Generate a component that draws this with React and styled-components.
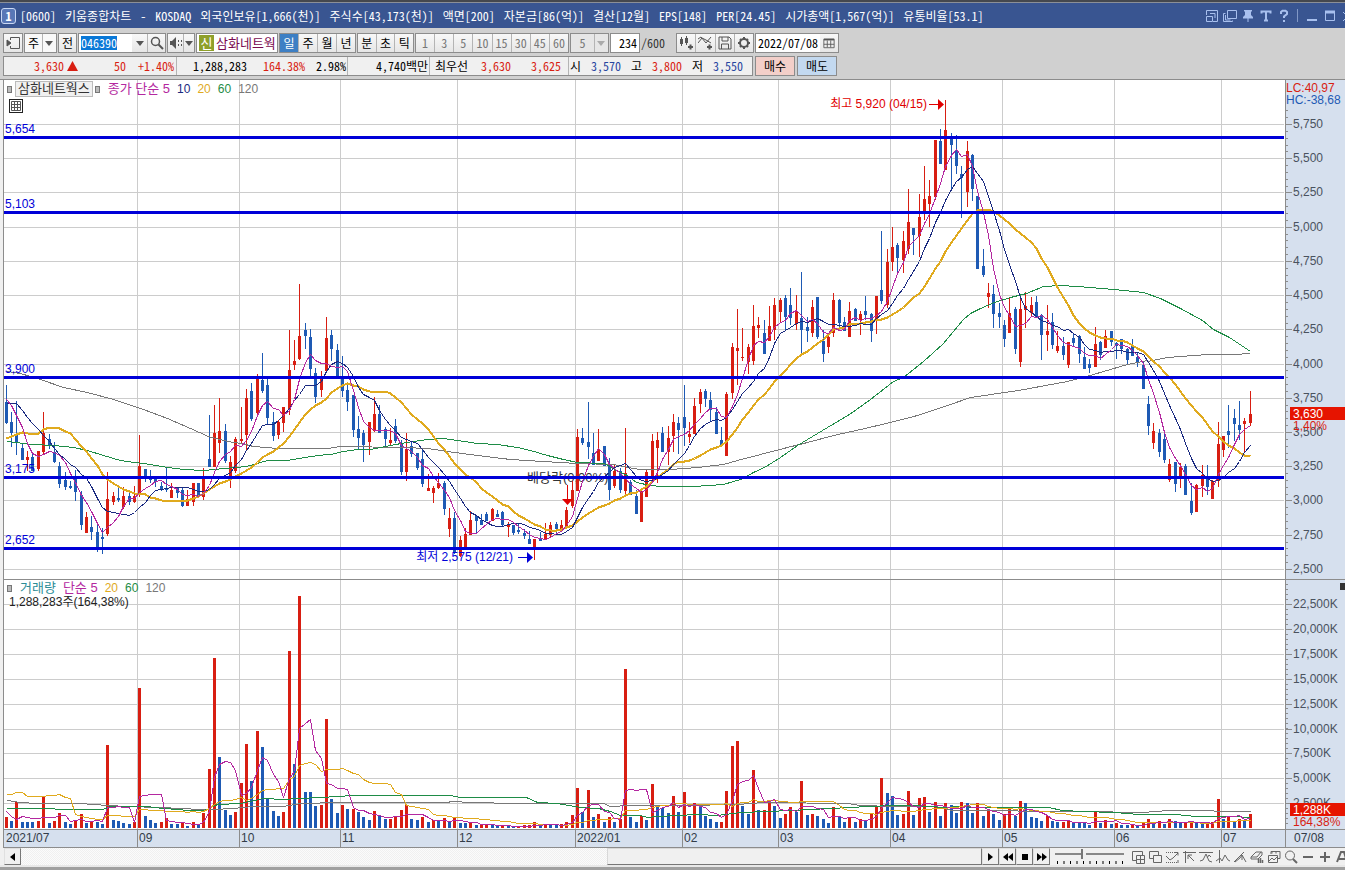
import React, { useEffect, useLayoutEffect, useRef, useState } from "react";
import styled, { createGlobalStyle } from "styled-components";

const MONO = '"Noto Sans Mono CJK KR", "Liberation Mono", "Noto Sans CJK KR", monospace';
const SANS = '"Liberation Sans", "Noto Sans CJK KR", sans-serif';

const C = {
  red: "#d81e12",
  blue: "#1e5ab4",
  line: "#0000d8",
  ma5: "#b428a0",
  ma10: "#1a2a80",
  ma20: "#e0aa1e",
  ma60: "#1e8c46",
  ma120: "#787878",
  grid: "#cccccc",
  axis: "#d6e0ee",
  border: "#8c8c8c",
};

const GlobalStyle = createGlobalStyle`
  * { box-sizing: border-box; }
  body { margin: 0; background: #f0f0f0; font: 12px/14px ${MONO}; color: #000; }
  button, input, select { font: inherit; color: inherit; margin: 0; padding: 0; border-radius: 0; }
`;

/* ---------- data ---------- */

// Each row is one day: direction, high, body top, body bottom, low,
// measured downwards in thirds of a pixel from the block's base line.
const CANDLE_BLOCKS = [
  [270, `B 346 396 458 462,B 425 456 488 530,B 393 493 520 556,B 523 533 570 570,R 543 560 570 603,B 553 560 602 602,R 543 543 598 602,R 426 488 545 552,B 491 506 526 538,B 515 545 575 580,
B 576 588 641 655,B 605 630 650 660,B 633 648 654 656,B 601 625 666 694,B 663 675 765 780,R 727 740 788 788,B 738 770 786 810,B 765 785 831 845,B 775 800 806 851,R 605 686 791 797,
R 666 678 696 705,B 648 685 689 697,R 651 678 710 716,B 660 678 696 704,R 648 678 696 698,R 495 588 675 680,B 596 598 628 635,B 600 625 631 638,B 622 626 637 650,B 636 649 659 664,
B 594 655 659 665,R 640 660 685 685,B 650 655 668 684,B 652 660 708 712,R 660 686 707 707,R 640 640 696 707,B 640 640 681 683,R 595 626 680 690,B 435 567 590 590,R 405 488 590 590,
R 384 483 518 548,B 462 483 572 578,R 558 576 618 654,R 500 507 603 608,R 410 507 514 520,R 357 384 494 540,B 339 363 446 452,R 312 325 428 431,B 249 330 362 368,B 320 345 443 464,
B 426 456 497 513,R 450 456 494 508,R 411 411 458 485,R 179 300 420 434,R 210 273 284 299,R 42 198 266 270,B 159 180 198 236,B 178 200 297 318,B 294 309 380 398,R 303 318 360 380,
R 141 204 302 308,B 180 195 237 272,B 222 240 318 318,B 258 324 362 380,B 346 360 396 422,B 375 375 480 502,B 438 477 503 540,B 480 488 524 575,R 456 456 515 554,R 381 432 483 486,
B 405 432 488 488,B 470 478 507 530,R 475 510 518 524,B 447 468 513 520,B 510 518 606 616,R 489 537 606 634,B 515 528 551 560,B 549 549 594 600,B 540 567 641 650,R 611 654 662 662,
R 648 654 668 698,R 609 639 653 656,B 633 639 716 734,R 714 744 776 800,B 725 744 848 852,R 798 810 858 862,R 774 792 830 830,R 723 750 795 795,B 738 738 752 792,B 732 750 764 764,
B 725 732 753 753,R 713 717 752 752,B 720 733 740 740,B 722 725 765 770,R 755 765 770 800,B 765 765 790 794,B 758 780 786 792,B 776 789 798 806,B 784 807 822 822,R 807 807 831 870,
B 785 807 812 812,R 759 792 806 806,R 757 765 794 800,B 757 762 776 794,R 750 765 782 782,R 711 720 768 768,R 633 660 708 714,R 477 501 662 662,B 474 504 520 524,B 396 516 531 566,
B 489 549 585 585,R 477 540 572 572,B 528 528 588 588,B 564 582 659 690,R 584 603 647 654,B 594 603 659 668,R 474 609 662 680,B 630 636 674 674,B 660 678 731 731,R 655 663 755 755,
R 600 606 680 680,R 492 513 618 635,R 486 510 533 640,B 471 489 545 545`],
  [240, `R 558 594 635 674,R 522 546 588 635,B 530 549 570 641,B 435 531 564 617,R 546 582 592 608,R 474 498 582 582,R 447 457 491 518,B 447 453 477 500,B 456 480 510 543,B 500 516 582 582,
B 560 600 618 618,R 456 462 648 648,R 308 321 458 478,R 207 324 333 435,R 264 350 354 362,R 312 321 366 402,R 195 258 363 374,R 231 255 264 294,B 240 279 341 341,R 198 258 302 302,
R 174 195 270 300,R 174 180 216 248,B 165 174 231 272,B 144 195 234 254,R 165 213 252 270,B 96 234 270 348,B 230 261 272 306,R 180 201 279 290,B 171 171 291 296,B 270 303 342 366,
R 282 292 321 339,R 159 180 279 290,B 177 180 249 264,B 230 246 272 272,R 186 213 291 291,B 204 206 242 242,R 213 221 240 285,B 168 213 225 240,B 219 222 272 306,R 168 168 240 282`],
  [80, `B 453 630 663 671,R 507 545 675 684,R 441 501 545 572,B 488 495 534 582,R 453 483 540 578,R 327 426 507 522,B 444 444 465 524,R 342 411 467 530,R 258 357 393 420,R 300 348 372 441,
R 180 180 350 360,B 147 183 251 251,R 60 150 269 269,B 160 174 194 332,B 165 210 258 282,B 258 282 294 414,R 183 213 335 380,B 222 225 326 362,B 348 348 567 567,B 507 558 585 590,
R 609 639 651 684,B 615 642 702 744,B 670 699 710 744,B 720 735 776 801,R 654 699 759 759,B 682 687 807 822,R 654 687 846 861,R 637 678 690 744,R 650 675 699 708,B 648 666 713 713,
B 702 705 765 840,R 675 753 765 813,B 699 726 795 806,R 753 798 813 819,B 771 798 825 839,R 787 787 855 863,B 762 774 789 801,B 765 768 822 849,B 800 831 866 866,B 838 852 863 879,
R 741 792 861 861,B 783 786 824 840,R 750 768 804 804,B 753 754 785 798,B 787 790 798 836,B 777 777 806 822,B 803 806 840 854,B 777 796 828 828,B 816 831 848 860`],
  [320, `B 125 135 207 207,B 228 252 318 345,R 309 333 369 387,B 327 339 396 411,B 333 357 420 428,R 417 432 480 486,B 426 426 492 516,R 429 441 468 504,B 432 438 525 525,B 489 543 579 585,
R 492 495 576 576,R 435 465 497 530,B 435 476 501 525,R 480 483 537 537,R 306 372 482 500,R 348 348 390 411,B 255 333 345 384,B 267 294 312 363,B 243 315 329 360,R 294 303 311 396,
R 212 282 309 318`],
];

const candles = CANDLE_BLOCKS.flatMap(([base, text]) =>
  text.split(",").map((row) => {
    const [dir, ...v] = row.trim().split(" ");
    const [high, top, bottom, low] = v.map((n) => base + Number(n) / 3);
    return { up: dir === "R", high, top, bottom, low, close: dir === "R" ? top : bottom };
  })
);

// Volume bars: distance of each bar's top from the block's base line, in thirds of a pixel.
const VOLUME_BLOCKS = [
  [759, `726 738 681 741 741 741 738 666 743 738 714 741 747 737 717 743 740 742 747 510 735 738 744 747 741 339 723 735 744 741 729 747 747 745 753 741 750 714 582 249 546 705 720 711 624 507 618 468 516 671 708 723 711 228 567 63 651 651 693 690 432 672 714 690 702 701 711 726 735 708 723 732 731 726 705 690 732 735 726 741 735 738 729 740`],
  [564, `534 549 549 548 554 553 552 555 558 557 558 558 557 556 555 546 555 554 556 556 552 546 525 444 516 450 531 522 546 531 546 537 87 531 546 528 540 432 501 504 519 468 516 456 528 489 501 528 537 546 545 453 318 303 498 522 390 510 509 480 498 534 522 501 516 423 525 522 528 537 549 501 531 546 534 546 537 543 522 498 414 459 468`],
  [264, `225 222 153 225 174 171 216 186 228 189 195 219 186 189 219 189 228 207 222 240 222 207 228 183 189 231 234 243 228 243 246 245 240 249 249 249 255 216 249 240 252 249 255 255 254 255 249 237 249 243 252 237 243 249 245 243 249 250 249 247 177 237 231 243 237 243 222`],
];

const VOLUME_BASE = 828;
const volumes = VOLUME_BLOCKS.flatMap(([base, text]) => text.split(" ").map((n) => (base - Number(n)) / 3));

// Simple moving average; `lead` holds the values before the first full window.
function average(values, size, lead) {
  return values.map((_, i) => {
    if (i < size - 1) return lead[i];
    let sum = 0;
    for (let j = i - size + 1; j <= i; j += 1) sum += values[j];
    return sum / size;
  });
}

const closes = candles.map((c) => c.close);
const thirds = (base, list) => list.map((n) => base + n / 3);
const volTops = volumes.map((v) => VOLUME_BASE - v);

const priceMA = {
  ma5: average(closes, 5, thirds(270, [387, 405, 435, 470])),
  ma10: average(closes, 10, thirds(270, [400, 400, 400, 420, 440, 460, 478, 495, 514])),
  ma20: average(closes, 20, thirds(270, [504, 498, 491, 486, 488, 488, 488, 478, 472, 470, 475, 484, 489, 506, 527, 544, 563, 586, 612])),
};
const volumeMA = {
  ma5: average(volTops, 5, thirds(575, [707, 724, 733, 722])),
  ma20: average(volTops, 20, thirds(575, [656, 656, 652, 652, 663, 663, 663, 663, 660, 660, 658, 666, 670, 716, 722, 726, 729, 732, 732])),
};

const trace = (blocks) =>
  blocks.flatMap(([bx, by, text]) =>
    text.split(" ").map((p) => {
      const [x, y] = p.split(",").map(Number);
      return [bx + x / 3, by + y / 3];
    })
  );

const PRICE_60 = trace([
  [0, 270, "20,514 97,522 163,525 220,532 260,540 310,556 360,570 403,576 451,581 500,590 548,598 610,601 673,595 739,588 802,571 860,569 930,559 980,553"],
  [330, 270, "0,551 40,542 80,538 120,536 181,526 229,516 290,507 340,505 380,511 440,518 502,523 560,531 600,540 650,555 700,568 742,577 823,580 853,596 890,615 919,636 960,644"],
  [640, 240, "30,734 60,739 160,739 250,733 300,716 340,696 373,682 420,650 470,614 560,561 628,521 690,477 760,424 790,410 850,364 910,308 970,236"],
  [880, 80, "270,700 300,683 343,665 390,652 439,638 490,619 540,616 590,617 700,627 790,637 840,655 900,683"],
  [1080, 320, "365,0 400,27 448,52 511,94"],
]);
const PRICE_120 = trace([
  [0, 270, "20,303 60,310 120,327 190,350 260,366 340,387 430,418 500,445 570,474 625,497 680,514 724,520 760,527 835,535 980,535"],
  [330, 270, "30,529 220,530 290,534 350,542 440,554 540,567 640,573 742,580 850,583 910,594"],
  [640, 240, "0,686 90,686 170,681 250,672 290,660 360,642 440,622 500,607 580,585 660,568 750,547 830,525 920,495 990,471"],
  [880, 80, "415,930 560,903 640,883 742,852 800,840"],
  [1080, 320, "200,122 260,112 380,103 460,103 511,100"],
]);
const VOLUME_60 = trace([
  [0, 575, "20,700 305,703 330,692 440,692 460,697 490,700 530,701 560,706 613,706 650,686 720,683 790,670 851,673 895,668 960,666 1060,659 1275,659 1345,661"],
  [450, 640, "0,466 30,472 228,472 260,486 320,490 390,500 445,503 480,512 510,526 570,526 590,530 620,527 740,522 800,524 870,516 950,512 1024,509 1080,507 1140,503 1200,502 1250,497 1330,495"],
  [895, 740, "0,196 60,196 100,199 150,202 190,198 250,201 460,202 500,210 560,214 660,217 730,223 840,223 900,228 960,229 1010,228 1066,232"],
]);
const VOLUME_120 = trace([
  [0, 575, "20,674 60,680 110,685 240,685 320,690 380,694 480,697 600,702 640,703 700,700 760,693 850,692 900,684 1020,681 1345,680"],
  [450, 640, "0,484 70,487 190,490 460,490 480,499 540,496 700,494 860,493 940,487 1190,488 1230,496 1330,497"],
  [895, 740, "0,198 120,198 170,210 560,213 740,215 820,211 920,211 990,214 1066,213"],
]);

const MONTHS = [
  [4, "2021/07"], [137, "09"], [239, "10"], [340, "11"], [457, "12"], [575, "2022/01"],
  [682, "02"], [778, "03"], [890, "04"], [1002, "05"], [1114, "06"], [1221, "07"],
];
const PRICES = [5750, 5500, 5250, 5000, 4750, 4500, 4250, 4000, 3750, 3500, 3250, 3000, 2750, 2500];
const priceY = (p) => Math.round(124 + (5750 - p) * 0.1369);
const VOLUMES = [22500, 20000, 17500, 15000, 12500, 10000, 7500, 5000, 2500];
const volumeY = (v) => Math.round(828 - v * 0.00995);
const LEVELS = [[137, "5,654"], [212, "5,103"], [377, "3,900"], [477, "3,175"], [548, "2,652"]];
const comma = (n) => n.toLocaleString("en-US");

const TITLE = [
  "[0600]", "키움종합차트", "-", "KOSDAQ", "외국인보유[1,666(천)]", "주식수[43,173(천)]", "액면[200]",
  "자본금[86(억)]", "결산[12월]", "EPS[148]", "PER[24.45]", "시가총액[1,567(억)]", "유통비율[53.1]",
];

/* ---------- frame ---------- */

const Page = styled.main`
  display: flex;
  flex-direction: column;
  overflow: hidden;
  background: #f0f0f0;
`;
const TopStrip = styled.div`
  height: 3px;
  background: #45484e;
  border-bottom: 1px solid #8b8f97;
`;
const TitleBar = styled.header`
  display: flex;
  align-items: center;
  height: 25px;
  padding-left: 1px;
  background: #395591;
  color: #fff;
  white-space: nowrap;
  overflow: hidden;
`;
const TitleBadge = styled.span`
  display: grid;
  place-items: center;
  width: 15px;
  height: 16px;
  margin-right: 4px;
  border: 1px solid #c9d8f4;
  border-radius: 3px;
  background: #5877b6;
  font-weight: 700;
`;
const Title = styled.h1`
  display: flex;
  gap: 9px;
  min-width: 0;
  margin: 0;
  flex: 1;
  overflow: hidden;
  font-size: 12px;
  font-weight: 400;
  line-height: 16px;
`;
const WindowTools = styled.div`
  display: flex;
  align-items: center;
  gap: 3px;
  margin-right: -10px;
  color: #a8c0ee;
`;
const WindowButton = styled.button`
  display: grid;
  place-items: center;
  width: 15px;
  height: 18px;
  border: 0;
  background: none;
`;
const WindowRule = styled.i`
  width: 1px;
  height: 13px;
  margin: 0 3px;
  background: #8198c6;
`;

const Toolbar = styled.section`
  display: flex;
  flex-direction: column;
  gap: 3px;
  padding: 5px 3px 3px;
  background: #d0d0d0;
  border-bottom: 1px solid ${C.border};
  white-space: nowrap;
`;
const Row = styled.div`
  display: flex;
  gap: 1px;
  height: 20px;
`;
const Group = styled.div`
  display: flex;
  flex: none;
  width: ${(p) => p.$w}px;
  border: 1px solid #8c8c8c;
  background: #ededed;
`;
const Tool = styled.button`
  display: grid;
  place-items: center;
  flex: ${(p) => (p.$w ? "none" : "1")};
  width: ${(p) => (p.$w ? p.$w + "px" : "auto")};
  border: 0;
  background: ${(p) => (p.$on ? "#3d7fc4" : "linear-gradient(#f8f8f8, #e6e6e6)")};
  color: ${(p) => (p.$on ? "#fff" : p.$dim ? "#777" : "#000")};
  & + & { border-left: 1px solid #b4b4b4; }
  svg { color: #555; }
`;
const Field = styled.input`
  flex: 1;
  min-width: 0;
  border: 0;
  padding: 0 2px;
  background: #fff;
  outline: none;
  text-align: ${(p) => p.$align || "left"};
  &::selection { background: #0a78d7; color: #fff; }
`;
const Pick = styled.label`
  position: relative;
  display: flex;
  flex: 1;
  &::after {
    content: "";
    position: absolute;
    right: 13px;
    top: 0;
    bottom: 0;
    width: 1px;
    background: #b4b4b4;
  }
  svg { position: absolute; right: 3px; top: 7px; pointer-events: none; }
`;
const Select = styled.select`
  appearance: none;
  width: 100%;
  border: 0;
  background: ${(p) => (p.$dim ? "#e6e6e6" : "#f8f8f8")};
  color: ${(p) => (p.$dim ? "#777" : "#000")};
  padding-right: 14px;
  text-align: center;
  text-align-last: center;
`;
const StockName = styled.div`
  display: flex;
  flex: 1;
  align-items: center;
  gap: 2px;
  padding-left: 2px;
  background: #fff;
  color: #7a0a50;
  font-size: 13px;
  overflow: hidden;
`;
const StockMark = styled.span`
  display: grid;
  place-items: center;
  flex: none;
  width: 15px;
  height: 16px;
  background: #8fa02a;
  color: #fff;
`;
const Total = styled.span`
  width: 34px;
  color: #333;
  line-height: 20px;
`;
const Quotes = styled.div`
  display: flex;
  width: 750px;
  border: 1px solid #8c8c8c;
  background: #f0f0f0;
`;
const QuoteGroup = styled.div`
  display: flex;
  width: ${(p) => p.$w}px;
  align-items: center;
  & + & { border-left: 1px solid #b4b4b4; }
`;
const Quote = styled.span`
  width: ${(p) => p.$w}px;
  text-align: right;
  color: ${(p) => p.$c || "#000"};
`;
const Order = styled.button`
  width: 40px;
  margin-left: 1px;
  border: 1px solid #8c8c8c;
  background: ${(p) => p.$bg};
`;

/* ---------- chart ---------- */

const ChartArea = styled.section`
  display: grid;
  grid-template-columns: minmax(0, 1fr) 60px;
  padding-left: 3px;
`;
const Plot = styled.div`
  position: relative;
  height: ${(p) => p.$h}px;
  background: #fff;
  border-left: 1px solid ${C.border};
  border-bottom: 1px solid ${C.border};
  overflow: hidden;
  svg { display: block; }
`;
const Scale = styled.div`
  height: ${(p) => p.$h}px;
  background: ${C.axis};
  border-left: 1px solid ${C.border};
  border-bottom: 1px solid ${C.border};
  svg { display: block; }
`;
const Drawing = styled.svg`
  font: 12px ${SANS};
`;
const Legend = styled.div`
  position: absolute;
  left: 3px;
  top: 1px;
  display: flex;
  align-items: center;
  gap: 2px;
  font: 12px/14px ${SANS};
  white-space: nowrap;
`;
const Mark = styled.i`
  width: 5px;
  height: 7px;
  margin-right: 1px;
  border: 1px solid #777;
  background: #bbb;
`;
const NameTag = styled.span`
  padding: 0 2px;
  border: 1px solid #bbb;
  background: #f0f0f0;
  color: #333;
  font-size: 13px;
`;
const Item = styled.span`
  margin-left: 5px;
  color: ${(p) => p.$c};
`;
const Label = styled(Item)`
  font-size: 13px;
`;
const VolumeNote = styled.div`
  position: absolute;
  left: 5px;
  top: 15px;
  font: 12px/14px ${SANS};
  color: #222;
`;
const GridButton = styled.button`
  position: absolute;
  left: 5px;
  top: 19px;
  width: 14px;
  height: 14px;
  display: grid;
  place-items: center;
  border: 1px solid #222;
  background: #fff;
`;

/* ---------- bottom bar ---------- */

const BottomBar = styled.footer`
  display: flex;
  height: 17px;
  padding-left: 4px;
  background: #f0f0f0;
  overflow: hidden;
`;
const Track = styled.div`
  display: flex;
  flex: 1;
  justify-content: flex-end;
  min-width: 0;
  background: repeating-conic-gradient(#f0f0f0 0 25%, #fbfbfb 0 50%) 0 0 / 2px 2px;
`;
const Thumb = styled.div`
  width: 39%;
  background: #f0f0f0;
  border: 1px solid #8c8c8c;
  border-color: #d8d8d8 #777 #777 #d8d8d8;
`;
const Push = styled.button`
  display: grid;
  place-items: center;
  flex: none;
  width: 17px;
  height: 17px;
  background: #f0f0f0;
  border: 1px solid #777;
  border-color: #e0e0e0 #777 #777 #e0e0e0;
`;
const Zoom = styled.label`
  flex: none;
  width: 70px;
  margin: 0 5px;
  svg { display: block; }
`;
const Slider = styled.input`
  display: block;
  appearance: none;
  width: 69px;
  height: 11px;
  background: linear-gradient(#888, #888) 0 5px / 100% 2px no-repeat;
  &::-webkit-slider-thumb {
    appearance: none;
    width: 5px;
    height: 10px;
    background: #f0f0f0;
    border-left: 2px solid #777;
  }
`;
const IconRow = styled.div`
  display: flex;
  flex: none;
  gap: 2px;
  width: 215px;
  overflow: hidden;
`;
const IconButton = styled.button`
  display: grid;
  place-items: center;
  flex: none;
  width: 15px;
  height: 17px;
  border: 0;
  background: none;
  color: #666;
`;
const Edge = styled.div`
  height: 5px;
  border-top: 2px solid #e8e8e8;
  background: #a0a0a0;
`;

/* ---------- icons ---------- */

const Icon = ({ s = 14, children, w = 1 }) => (
  <svg width={s} height={s} viewBox="0 0 14 14" fill="none" stroke="currentColor" strokeWidth={w} aria-hidden="true">
    {children}
  </svg>
);
const Down = ({ c = "#555" }) => (
  <svg width="8" height="5" viewBox="0 0 8 5" aria-hidden="true"><path d="M0 0h8L4 5z" fill={c} /></svg>
);

const WINDOW_ICONS = [
  ["Restore layout", <><path d="M1.500 6V1.500h11v11H8" /><path d="M1.500 7.500h6v5h-6zM5 4.500h5V9" /></>],
  ["Duplicate window", <><path d="M4.500 1.500h9v8h-9z" /><path d="M2.500 4.500h-2v8h9v-1M2.500 6v5h5" /></>],
  ["Pin", <><path d="M3 1h8v1.500H10V6l2 2v1.500H2V8l2-2V2.500H3z" fill="currentColor" stroke="none" /><path d="M7 9v4" /></>],
  ["Text", <path d="M2.500 4.500v-2h9v2M7 2.500v9M5 11.500h4" strokeWidth="2" />],
  ["Help", <><path d="M4 5V3l1.500-1.300h3L10 3v2L7 7.500V9" strokeWidth="2" /><path d="M6 11h2v2H6z" fill="currentColor" stroke="none" /></>],
];
const BOTTOM_ICONS = [
  ["Add pane", <><path d="M5 10.500H1.500v-9h10V5" /><path d="M5.500 5.500h8v8h-8zM9.500 5.500v8M5.500 9.500h8" /></>],
  ["Overlap pane", <><path d="M5 8.500H1.500v-7h9V5" /><path d="M5.500 5.500h8v7h-8z" /></>],
  ["Range", <><path d="M1 2.500h9M1 12.500h12" strokeDasharray="1 1" /><path d="M1 6l4 4 3-2 5-5M10 2.500h3v3M13 10v3" /></>],
  ["Cursor line", <><path d="M1 2.500h13M3.500 1v12M6 5l6 6M6 9V5h4" /></>],
  ["Trend", <><path d="M0 2.500h14M1 11l3-1 3-6 3 7 3 1M8 8l2-3 2 2" /></>],
  ["Split", <><path d="M3.500 0v13M0 11l4-3 2 3 3-6 3 5 2 1" /></>],
  ["Draw", <><path d="M1 12L11 2M2 12l5-4 2-3 4 7M9 5v5" /></>],
  ["Erase", <><path d="M1 7l5-5h6v3L8 9H1zM1 7h6l4-5" /><path d="M8.500 9v4M10.500 8v5M12.500 10v3" strokeWidth="1.500" /></>],
  ["Save chart", <><path d="M4 4V1.500h9v7h-2M5 1.500v2M9 1.500v2" /><path d="M1.500 5.500h9v7h-9zM2 11l3-3 2 2 3-3" /></>],
  ["Magnify", <><circle cx="6" cy="5.500" r="4.500" /><path d="M9 9l4 4" strokeWidth="2" /></>],
  ["Zoom out", <path d="M2 7h10" strokeWidth="2" />],
  ["Zoom in", <path d="M2 7h10M7 2v10" strokeWidth="2" />],
  ["Auto scale", <path d="M2 12L6 2h3l3 10M4 9h7" strokeWidth="2" />],
];

/* ---------- parts ---------- */

const BASE_WIDTH = 1281;

function useWidth() {
  const ref = useRef(null);
  const [width, setWidth] = useState(BASE_WIDTH);
  useLayoutEffect(() => {
    const measure = () => setWidth(ref.current.clientWidth);
    measure();
    const watcher = new ResizeObserver(measure);
    watcher.observe(ref.current);
    return () => watcher.disconnect();
  }, []);
  return [ref, width];
}

const makeX = (width) => {
  const k = width / BASE_WIDTH;
  return { at: (x) => Math.round((x - 4) * k), day: (i) => Math.floor((2.3 + 5.338 * i) * k) };
};

const Line = ({ points, color, w = 1 }) => (
  <polyline
    points={points.map(([x, y]) => `${x},${Math.round(y) + 0.5}`).join(" ")}
    fill="none" stroke={color} strokeWidth={w} strokeLinejoin="round" shapeRendering="crispEdges"
  />
);

function PricePlot() {
  const [ref, width] = useWidth();
  const x = makeX(width);
  const daily = (list) => list.map((y, i) => [x.day(i) + 0.5, y]);
  const traced = (list) => list.map(([px, y]) => [x.at(px) + 0.5, y]);
  const peak = x.day(176);
  const trough = x.day(99);
  const drop = x.at(567);
  return (
    <Plot $h={500} ref={ref}>
      <Drawing width={width} height={499}>
        <g transform="translate(0 -80)">
          <g fill={C.grid} shapeRendering="crispEdges">
            {PRICES.map((p) => <rect key={p} x={0} y={priceY(p)} width={width - 1} height={1} />)}
            {MONTHS.slice(1).map(([m]) => <rect key={m} x={x.at(m)} y={80} width={1} height={499} />)}
          </g>
          <text x={x.at(527)} y={482} fontSize={13} fill="#333">배당락(0,00%)</text>
          <g shapeRendering="crispEdges">
            {candles.map((c, i) => {
              const top = Math.round(c.top);
              const high = Math.round(c.high);
              return (
                <g key={i} fill={c.up ? C.red : C.blue}>
                  <rect x={x.day(i)} y={high} width={1} height={Math.max(1, Math.round(c.low) - high)} />
                  <rect x={x.day(i) - 1} y={top} width={3} height={Math.max(1, Math.round(c.bottom) - top)} />
                </g>
              );
            })}
          </g>
          <Line points={traced(PRICE_120)} color={C.ma120} />
          <Line points={traced(PRICE_60)} color={C.ma60} />
          <Line points={daily(priceMA.ma20)} color={C.ma20} w={2} />
          <Line points={daily(priceMA.ma10)} color={C.ma10} />
          <Line points={daily(priceMA.ma5)} color={C.ma5} />
          {LEVELS.map(([y, label]) => (
            <g key={y} fill={C.line}>
              <rect x={0} y={y - 1} width={width - 1} height={3} />
              <text x={1} y={y - 4}>{label}</text>
            </g>
          ))}
          <g fill="#e00000">
            <text x={peak - 18} y={108} textAnchor="end">최고 5,920 (04/15)</text>
            <rect x={peak - 16} y={104} width={11} height={1} />
            <path d={`M${peak - 7} 99v11l6-5.500z`} />
            <rect x={drop} y={485} width={1} height={14} />
            <path d={`M${drop - 5} 499h11l-5.500 6z`} />
          </g>
          <g fill={C.line}>
            <text x={trough - 21} y={561} textAnchor="end">최저 2,575 (12/21)</text>
            <rect x={trough - 16} y={557} width={11} height={1} />
            <path d={`M${trough - 7} 552v11l6-5.500z`} />
          </g>
        </g>
      </Drawing>
      <Legend>
        <Mark />
        <NameTag>삼화네트웍스</NameTag>
        <Mark />
        <Label $c={C.ma5}>종가 단순 5</Label>
        <Item $c={C.ma10}>10</Item>
        <Item $c={C.ma20}>20</Item>
        <Item $c={C.ma60}>60</Item>
        <Item $c={C.ma120}>120</Item>
      </Legend>
      <GridButton aria-label="Data table">
        <svg width="10" height="10" viewBox="0 0 10 10" stroke="#555" fill="none" aria-hidden="true">
          <path d="M.5.5h9v9h-9zM.5 3.500h9M.5 6.500h9M3.500.5v9M6.500.5v9" />
        </svg>
      </GridButton>
    </Plot>
  );
}

function VolumePlot() {
  const [ref, width] = useWidth();
  const x = makeX(width);
  const daily = (list) => list.map((y, i) => [x.day(i) + 0.5, y]);
  const traced = (list) => list.map(([px, y]) => [x.at(px) + 0.5, y]);
  return (
    <Plot $h={250} ref={ref}>
      <Drawing width={width} height={249}>
        <g transform="translate(0 -580)">
          <g fill={C.grid} shapeRendering="crispEdges">
            {VOLUMES.map((v) => <rect key={v} x={0} y={volumeY(v)} width={width - 1} height={1} />)}
            {MONTHS.slice(1).map(([m]) => <rect key={m} x={x.at(m)} y={580} width={1} height={249} />)}
          </g>
          <g shapeRendering="crispEdges">
            {volumes.map((v, i) => {
              const h = Math.max(1, Math.round(v));
              const up = i === 0 || v > volumes[i - 1];
              return <rect key={i} x={x.day(i) - 1} y={VOLUME_BASE - h} width={3} height={h} fill={up ? C.red : C.blue} />;
            })}
          </g>
          <Line points={traced(VOLUME_120)} color={C.ma120} />
          <Line points={traced(VOLUME_60)} color={C.ma60} />
          <Line points={daily(volumeMA.ma20)} color={C.ma20} />
          <Line points={daily(volumeMA.ma5)} color={C.ma5} />
        </g>
      </Drawing>
      <Legend>
        <Mark />
        <Label $c="#2a8c96">거래량</Label>
        <Label $c={C.ma5}>단순 5</Label>
        <Item $c={C.ma20}>20</Item>
        <Item $c={C.ma60}>60</Item>
        <Item $c={C.ma120}>120</Item>
      </Legend>
      <VolumeNote>1,288,283주(164,38%)</VolumeNote>
    </Plot>
  );
}

function DateAxis() {
  const [ref, width] = useWidth();
  const x = makeX(width);
  return (
    <Plot $h={18} ref={ref}>
      <Drawing width={width} height={17}>
        <rect width={width} height={17} fill={C.axis} />
        {MONTHS.map(([m, label], i) => (
          <g key={m}>
            {i > 0 && <rect x={x.at(m)} y={0} width={1} height={17} fill={C.border} />}
            <text x={x.at(m) + 2} y={12} fill="#333c48">{label}</text>
          </g>
        ))}
      </Drawing>
    </Plot>
  );
}

function ScaleDrawing({ top, height, marks, minor, children }) {
  const count = Math.floor((height + top - marks[0][0]) / minor);
  const before = Math.floor((marks[0][0] - top) / minor);
  return (
    <Drawing width={59} height={height}>
      <g transform={`translate(0 ${-top})`}>
        <g fill={C.border} shapeRendering="crispEdges">
          {Array.from({ length: count + before }, (_, i) => (
            <rect key={i} x={0} y={Math.round(marks[0][0] + (i - before) * minor)} width={2} height={1} />
          ))}
          {marks.map(([y]) => <rect key={y} x={0} y={y} width={6} height={1} />)}
        </g>
        {marks.map(([y, label]) => <text key={y} x={7} y={y + 4} fill="#4a525e">{label}</text>)}
        {children}
      </g>
    </Drawing>
  );
}

function CodeField() {
  const ref = useRef(null);
  useEffect(() => {
    ref.current.focus();
    ref.current.select();
  }, []);
  return <Field ref={ref} defaultValue="046390" aria-label="종목코드" />;
}

export default function App() {
  return (
    <Page>
      <GlobalStyle />
      <TopStrip />
      <TitleBar>
        <TitleBadge>1</TitleBadge>
        <Title>{TITLE.map((part) => <span key={part}>{part}</span>)}</Title>
        <WindowTools>
          {WINDOW_ICONS.map(([name, art]) => (
            <WindowButton key={name} aria-label={name}><Icon>{art}</Icon></WindowButton>
          ))}
          <WindowRule />
          <WindowButton aria-label="Minimize"><Icon><path d="M2 11h10" strokeWidth="2" /></Icon></WindowButton>
          <WindowButton aria-label="Maximize"><Icon><path d="M2.500 2.500h9v9h-9z" /><path d="M2 3h10" strokeWidth="3" /></Icon></WindowButton>
          <WindowButton aria-label="Close"><Icon><path d="M2 3l9 9M11 3l-9 9" /></Icon></WindowButton>
        </WindowTools>
      </TitleBar>

      <Toolbar>
        <Row>
          <Group $w={20}>
            <Tool aria-label="Side panel"><Icon><path d="M4.500 4V1.500h9v11h-9V10" /><path d="M1 4l4 3-4 3z" fill="currentColor" /></Icon></Tool>
          </Group>
          <Group $w={33}>
            <Pick><Select aria-label="구분"><option>주</option></Select><Down /></Pick>
          </Group>
          <Group $w={19}><Tool>전</Tool></Group>
          <Group $w={88}>
            <CodeField />
            <Tool $w={15} aria-label="종목 목록"><Down /></Tool>
            <Tool $w={18} aria-label="종목 검색"><Icon><circle cx="5.500" cy="5.500" r="4" strokeWidth="1.500" /><path d="M8.500 8.500l4.500 4.500" strokeWidth="2" /></Icon></Tool>
          </Group>
          <Group $w={28}>
            <Tool aria-label="음성"><Icon><path d="M1 5h2l4-4v12L3 9H1z" fill="#555" stroke="none" /><path d="M9.500 4v6M12.500 4v6" strokeDasharray="2 2" /></Icon></Tool>
            <Tool $w={11} aria-label="음성 선택"><Down /></Tool>
          </Group>
          <Group $w={82}>
            <StockName><StockMark>신</StockMark>삼화네트웍</StockName>
          </Group>
          <Group $w={77}>
            <Tool $on>일</Tool><Tool>주</Tool><Tool>월</Tool><Tool>년</Tool>
          </Group>
          <Group $w={57}>
            <Tool>분</Tool><Tool>초</Tool><Tool>틱</Tool>
          </Group>
          <Group $w={154}>
            {[1, 3, 5, 10, 15, 30, 45, 60].map((n) => <Tool key={n} $dim>{n}</Tool>)}
          </Group>
          <Group $w={39}>
            <Pick><Select $dim aria-label="간격"><option>5</option></Select><Down c="#aaa" /></Pick>
          </Group>
          <Group $w={30}><Field $align="right" defaultValue="234" aria-label="봉 개수" /></Group>
          <Total>/600</Total>
          <Group $w={78}>
            <Tool aria-label="봉 추가"><Icon><path d="M2.500 1v9M7.500 0v9" /><path d="M1 3h3v5H1zM6 2h3v5H6z" fill="currentColor" stroke="none" /><path d="M9 11h5M11.500 8.500v5" strokeWidth="2" /></Icon></Tool>
            <Tool aria-label="지표 추가"><Icon><path d="M0 3l3-2 5 6 5-6M0 7l4-5 4 2 5 3" /><path d="M9 11h5M11.500 8.500v5" strokeWidth="2" /></Icon></Tool>
            <Tool aria-label="저장"><Icon><path d="M1 1h10l2 2v10H1zM4 1v4h6V1M3.500 13V8h7v5" /></Icon></Tool>
            <Tool aria-label="설정"><Icon><circle cx="7" cy="7" r="4" strokeWidth="2" /><path d="M7 1v2M7 11v2M1 7h2M11 7h2M3 3l1 1M10 10l1 1M11 3l-1 1M4 10l-1 1" strokeWidth="2" /></Icon></Tool>
          </Group>
          <Group $w={84}>
            <Field defaultValue="2022/07/08" aria-label="날짜" />
            <Tool $w={18} aria-label="달력"><Icon s={12}><path d="M1 2.500h12v10H1z" /><path d="M1 3h12" strokeWidth="2" /><path d="M1 8.500h12M5 4v8M9 4v8" /></Icon></Tool>
          </Group>
        </Row>
        <Row>
          <Quotes>
            <QuoteGroup $w={172}>
              <Quote $w={60} $c={C.red}>3,630</Quote>
              <Quote $w={14} $c={C.red}>
                <svg width="11" height="10" viewBox="0 0 11 10" aria-label="상승"><path d="M5.500 0L11 10H0z" fill="currentColor" /></svg>
              </Quote>
              <Quote $w={48} $c={C.red}>50</Quote>
              <Quote $w={48} $c={C.red}>+1.40%</Quote>
            </QuoteGroup>
            <QuoteGroup $w={171}>
              <Quote $w={70}>1,288,283</Quote>
              <Quote $w={58} $c={C.red}>164.38%</Quote>
              <Quote $w={41}>2.98%</Quote>
            </QuoteGroup>
            <QuoteGroup $w={82}><Quote $w={80}>4,740백만</Quote></QuoteGroup>
            <QuoteGroup $w={139}>
              <Quote $w={38}>최우선</Quote>
              <Quote $w={43} $c={C.red}>3,630</Quote>
              <Quote $w={50} $c={C.red}>3,625</Quote>
            </QuoteGroup>
            <QuoteGroup $w={184}>
              <Quote $w={12}>시</Quote>
              <Quote $w={40} $c="#2846a0">3,570</Quote>
              <Quote $w={21}>고</Quote>
              <Quote $w={40} $c={C.red}>3,800</Quote>
              <Quote $w={21}>저</Quote>
              <Quote $w={40} $c="#2846a0">3,550</Quote>
            </QuoteGroup>
          </Quotes>
          <Order $bg="#f3cfc9">매수</Order>
          <Order $bg="#c3d9f0">매도</Order>
        </Row>
      </Toolbar>

      <ChartArea>
        <PricePlot />
        <Scale $h={500}>
          <ScaleDrawing top={80} height={499} minor={6.845} marks={PRICES.map((p) => [priceY(p), comma(p)])}>
            <rect x={0} y={80} width={59} height={26} fill={C.axis} />
            <text x={0} y={92} fill={C.red}>LC:40,97</text>
            <text x={0} y={104} fill={C.blue}>HC:-38,68</text>
            <rect x={4} y={407} width={55} height={13} fill="#e61400" />
            <text x={7} y={418} fill="#fff">3,630</text>
            <text x={7} y={430} fill={C.red}>1,40%</text>
          </ScaleDrawing>
        </Scale>
        <VolumePlot />
        <Scale $h={250}>
          <ScaleDrawing top={580} height={249} minor={4.975} marks={VOLUMES.map((v) => [volumeY(v), comma(v) + "K"])}>
            <rect x={54} y={583} width={5} height={7} fill="#333" />
            <rect x={4} y={803} width={55} height={13} fill="#e61400" />
            <text x={7} y={814} fill="#fff">1,288K</text>
            <text x={7} y={826} fill={C.red}>164,38%</text>
          </ScaleDrawing>
        </Scale>
        <DateAxis />
        <Scale $h={18}>
          <Drawing width={59} height={17}><text x={8} y={12} fill="#333c48">07/08</text></Drawing>
        </Scale>
      </ChartArea>

      <BottomBar>
        <Push aria-label="Scroll left"><svg width="5" height="8" viewBox="0 0 5 8"><path d="M5 0v8L0 4z" /></svg></Push>
        <Track><Thumb /></Track>
        <Push aria-label="Scroll right"><svg width="5" height="8" viewBox="0 0 5 8"><path d="M0 0v8l5-4z" /></svg></Push>
        <Push aria-label="Rewind"><svg width="10" height="8" viewBox="0 0 10 8"><path d="M5 0v8L0 4zM10 0v8L5 4z" /></svg></Push>
        <Push aria-label="Stop"><svg width="6" height="6" viewBox="0 0 6 6"><path d="M0 0h6v6H0z" /></svg></Push>
        <Push aria-label="Forward"><svg width="10" height="8" viewBox="0 0 10 8"><path d="M0 0v8l5-4zM5 0v8l5-4z" /></svg></Push>
        <Zoom>
          <Slider type="range" min="0" max="10" defaultValue="4" aria-label="Zoom" />
          <svg width="69" height="5" viewBox="0 0 69 5" aria-hidden="true">
            <path d="M2.500 2v3M9 2v3M15.500 2v3M22 2v3M28.500 2v3M35 2v3M41.500 2v3M48 2v3M54.500 2v3M61 2v3M67.500 2v3" stroke="#000" />
          </svg>
        </Zoom>
        <IconRow>
          {BOTTOM_ICONS.map(([name, art]) => (
            <IconButton key={name} aria-label={name}><Icon>{art}</Icon></IconButton>
          ))}
        </IconRow>
      </BottomBar>
      <Edge />
    </Page>
  );
}
